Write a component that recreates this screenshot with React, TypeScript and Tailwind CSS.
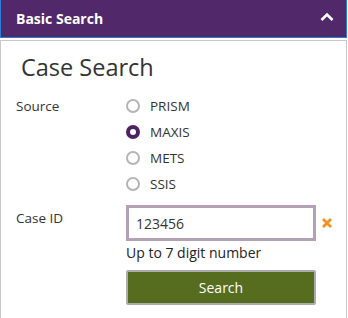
import { useState } from "react";

const sources = ["PRISM", "MAXIS", "METS", "SSIS"];

export default function App() {
  const [source, setSource] = useState("MAXIS");
  const [caseId, setCaseId] = useState("123456");

  return (
    <div className="w-[347px] bg-white font-['Open_Sans',sans-serif] text-[#333]">
      <div className="flex h-[38px] items-center justify-between border-x border-b border-[#2a7fd4] bg-[#51296a] pl-[15px] pr-[12px]">
        <span className="text-[14px] font-bold text-white">Basic Search</span>
        <svg width="14" height="10" viewBox="0 0 14 10" className="mt-[-4px]">
          <path d="M1.5 8 L7 2.5 L12.5 8" fill="none" stroke="white" strokeWidth="2.6" />
        </svg>
      </div>

      <div className="mt-[2px] h-[278px] border-x border-t border-[#c8c8c8] pl-[15px]">
        <h1 className="mt-[10px] pl-[5px] text-[23.5px] leading-[32px] text-[#333]">Case Search</h1>

        <div className="mt-[14px] flex">
          <div className="w-[110px] text-[13.5px] leading-[18px]">Source</div>
          <div className="flex flex-col gap-[8px]">
            {sources.map((s) => (
              <label key={s} className="flex h-[18px] cursor-pointer items-center gap-[10px] text-[13.5px]">
                <input
                  type="radio"
                  name="source"
                  checked={source === s}
                  onChange={() => setSource(s)}
                  className="sr-only"
                />
                <span
                  className={
                    source === s
                      ? "h-[14px] w-[14px] rounded-full border-[4px] border-[#4e2362] bg-white"
                      : "h-[14px] w-[14px] rounded-full border-[2px] border-[#b5b5b5] bg-white"
                  }
                />
                <span className="text-[#333]">{s}</span>
              </label>
            ))}
          </div>
        </div>

        <div className="mt-[12px] flex">
          <div className="w-[110px] pt-[4px] text-[13.5px] leading-[18px]">Case ID</div>
          <div className="flex flex-col">
            <div className="flex items-center">
              <input
                value={caseId}
                onChange={(e) => setCaseId(e.target.value)}
                className="h-[36px] w-[190px] border-[3px] border-[#b3a1b8] px-[7px] text-[14px] text-[#333] outline-none"
              />
              <button className="ml-[5px] text-[#f5911e]" onClick={() => setCaseId("")}>
                <svg width="12" height="12" viewBox="0 0 12 12">
                  <path d="M2 2 L10 10 M10 2 L2 10" stroke="#f5911e" strokeWidth="2.8" />
                </svg>
              </button>
            </div>
            <div className="mt-[2px] text-[14px] leading-[19px] text-[#222]">Up to 7 digit number</div>
            <button className="mt-[8px] h-[35px] w-[190px] rounded-[2px] border-2 border-[#acacac] bg-[#566d20] text-[14px] text-white">
              Search
            </button>
          </div>
        </div>
      </div>
    </div>
  );
}
